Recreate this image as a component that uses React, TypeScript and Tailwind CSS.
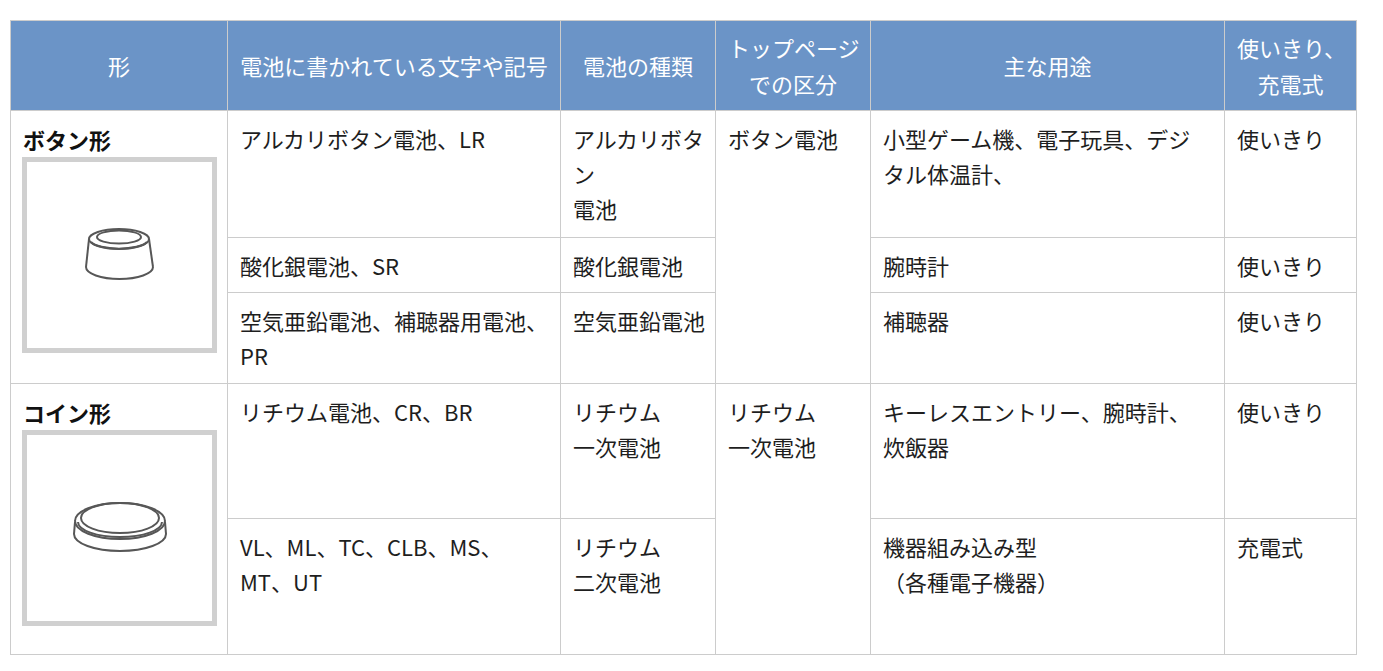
const font = { fontFamily: '"Noto Sans CJK JP", "Noto Sans", sans-serif' };

function ButtonCell() {
  return (
    <svg width="74" height="56" viewBox="0 0 74 56" fill="none" stroke="#575757" strokeWidth="2">
      <ellipse cx="36" cy="12" rx="30" ry="10" />
      <ellipse cx="36" cy="10" rx="22" ry="6.5" />
      <path d="M8 15 A29 9 0 0 0 64 15" />
      <path d="M6 12 L3 40" />
      <path d="M66 12 L70 40" />
      <path d="M3 40 A33.5 12 0 0 0 70 40" />
    </svg>
  );
}

function CoinCell() {
  return (
    <svg width="102" height="56" viewBox="0 0 102 56" fill="none" stroke="#575757" strokeWidth="2">
      <ellipse cx="51" cy="18" rx="39" ry="15" />
      <path d="M9 22 A42 15 0 0 0 93 22" />
      <ellipse cx="51" cy="21" rx="45" ry="18" />
      <path d="M6 22 L5 34" />
      <path d="M96 22 L97 34" />
      <path d="M5 34 A46 17 0 0 0 97 34" />
    </svg>
  );
}

function ShapeCell({ title, children }: { title: string; children: React.ReactNode }) {
  return (
    <div className="pt-px">
      <div className="font-bold text-[#111]">{title}</div>
      <div className="flex h-[196px] w-[195px] -ml-px items-center justify-center border-[5px] border-[#d0d0d0] bg-white">
        {children}
      </div>
    </div>
  );
}

const th = "border border-[#cccccc] px-[12px] py-[9px] text-center align-middle font-normal text-white whitespace-nowrap";
const td = "border border-[#cccccc] px-[12px] pt-[9.5px] pb-[8.5px] align-top whitespace-nowrap";

export default function App() {
  return (
    <div className="min-h-screen bg-white pt-[20px] pl-[10px]" style={font}>
      <table className="table-fixed border-collapse text-[22px] leading-[35.2px] text-[#1e1e1e] w-[1347px]">
        <colgroup>
          <col className="w-[217px]" />
          <col className="w-[333px]" />
          <col className="w-[155px]" />
          <col className="w-[155px]" />
          <col className="w-[354px]" />
          <col className="w-[132px]" />
        </colgroup>
        <thead>
          <tr className="h-[90px] bg-[#6b94c7]">
            <th className={th}>形</th>
            <th className={th}>電池に書かれている文字や記号</th>
            <th className={th}>電池の種類</th>
            <th className={th}>トップページ<br />での区分</th>
            <th className={th}>主な用途</th>
            <th className={th}>使いきり、<br />充電式</th>
          </tr>
        </thead>
        <tbody>
          <tr className="h-[127px]">
            <td className={td} rowSpan={3}>
              <ShapeCell title="ボタン形">
                <ButtonCell />
              </ShapeCell>
            </td>
            <td className={td}>アルカリボタン電池、LR</td>
            <td className={td}>アルカリボタ<br />ン<br />電池</td>
            <td className={td} rowSpan={3}>ボタン電池</td>
            <td className={td}>小型ゲーム機、電子玩具、デジ<br />タル体温計、</td>
            <td className={td}>使いきり</td>
          </tr>
          <tr className="h-[55px]">
            <td className={td}>酸化銀電池、SR</td>
            <td className={td}>酸化銀電池</td>
            <td className={td}>腕時計</td>
            <td className={td}>使いきり</td>
          </tr>
          <tr className="h-[91px]">
            <td className={td}>空気亜鉛電池、補聴器用電池、<br />PR</td>
            <td className={td}>空気亜鉛電池</td>
            <td className={td}>補聴器</td>
            <td className={td}>使いきり</td>
          </tr>
          <tr className="h-[135px]">
            <td className={td} rowSpan={2}>
              <ShapeCell title="コイン形">
                <CoinCell />
              </ShapeCell>
            </td>
            <td className={td}>リチウム電池、CR、BR</td>
            <td className={td}>リチウム<br />一次電池</td>
            <td className={td} rowSpan={2}>リチウム<br />一次電池</td>
            <td className={td}>キーレスエントリー、腕時計、<br />炊飯器</td>
            <td className={td}>使いきり</td>
          </tr>
          <tr className="h-[136px]">
            <td className={td}>VL、ML、TC、CLB、MS、<br />MT、UT</td>
            <td className={td}>リチウム<br />二次電池</td>
            <td className={td}>機器組み込み型<br />（各種電子機器）</td>
            <td className={td}>充電式</td>
          </tr>
        </tbody>
      </table>
    </div>
  );
}
